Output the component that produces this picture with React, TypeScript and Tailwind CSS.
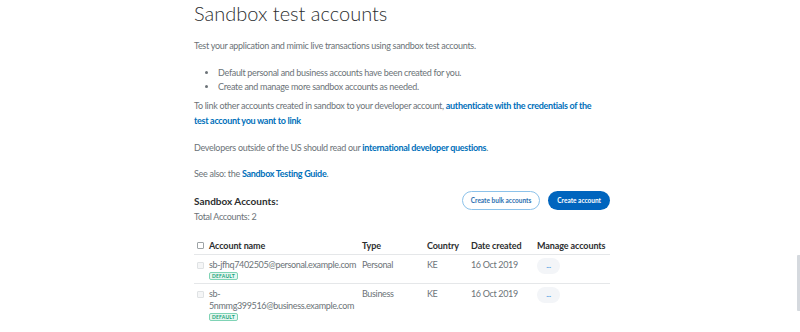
import React from 'react';

const font = { fontFamily: 'Lato, "Open Sans", sans-serif' };

function Badge() {
  return (
    <span className="mt-[1px] block w-fit rounded-[2px] border border-[#7fd3b5] bg-[#e6f7f0] px-[2px] text-[5px] leading-[6px] font-bold tracking-[0.2px] text-[#15a27a]">
      DEFAULT
    </span>
  );
}

function Row({ name, type }: { name: React.ReactNode; type: string }) {
  return (
    <tr className="border-b border-[#e5e7e9] align-top text-[9px] tracking-[-0.35px] text-[#6c7378] last:border-b-0">
      <td className="pt-[4px] pl-[3px]">
        <span className="mt-[3px] block h-[7px] w-[7px] rounded-[1px] border border-[#dfe2e4] bg-[#f5f6f7]" />
      </td>
      <td className="pt-[4px] pb-[3px] leading-[12px]">
        <div className="whitespace-nowrap">{name}</div>
        <Badge />
      </td>
      <td className="pt-[4px] leading-[12px]">{type}</td>
      <td className="pt-[4px] leading-[12px]">KE</td>
      <td className="pt-[4px] leading-[12px]">16 Oct 2019</td>
      <td className="pt-[3px]">
        <button className="flex h-[16px] w-[23px] items-center justify-center rounded-full bg-[#f3f5f8] text-[8px] font-bold leading-none text-[#5aa6e6]">
          <span className="-mt-[3px]">...</span>
        </button>
      </td>
    </tr>
  );
}

export default function App() {
  return (
    <div className="relative h-[332px] w-[800px] overflow-hidden bg-white" style={font}>
      <div className="ml-[194px] w-[416px] text-[9px] leading-[15px] tracking-[-0.3px] text-[#6c7378]">
        <h1 className="pt-[1px] text-[20px] leading-[24px] font-light tracking-normal text-[#2c2e2f]">Sandbox test accounts</h1>

        <p className="mt-[13px]">Test your application and mimic live transactions using sandbox test accounts.</p>

        <ul className="mt-[13px] ml-[24px] list-disc leading-[14px]">
          <li>Default personal and business accounts have been created for you.</li>
          <li>Create and manage more sandbox accounts as needed.</li>
        </ul>

        <p className="mt-[4px] max-w-[402px]">
          To link other accounts created in sandbox to your developer account,{' '}
          <a className="font-bold text-[#0070ba]">authenticate with the credentials of the test account you want to link</a>
        </p>

        <p className="mt-[12px]">
          Developers outside of the US should read our{' '}
          <a className="font-bold text-[#0070ba]">international developer questions</a>.
        </p>

        <p className="mt-[11px]">
          See also: the <a className="font-bold text-[#0070ba]">Sandbox Testing Guide</a>.
        </p>

        <div className="mt-[9px] flex items-start justify-between">
          <div>
            <h2 className="mt-[4px] text-[10px] leading-[14px] font-bold tracking-normal text-[#2c2e2f]">Sandbox Accounts:</h2>
            <div className="mt-[2px] leading-[13px]">Total Accounts: 2</div>
          </div>
          <div className="flex gap-[8px] pt-[1px] tracking-normal">
            <button className="h-[19px] rounded-full border border-[#8cc2ea] bg-white px-[8px] text-[6.5px] font-bold text-[#2c6fb0]">
              Create bulk accounts
            </button>
            <button className="h-[19px] rounded-full bg-[#0065be] px-[9px] text-[6.5px] font-bold text-white">
              Create account
            </button>
          </div>
        </div>

        <table className="mt-[16px] w-full table-fixed border-collapse">
          <colgroup>
            <col className="w-[15px]" />
            <col className="w-[153px]" />
            <col className="w-[65px]" />
            <col className="w-[44px]" />
            <col className="w-[66px]" />
            <col />
          </colgroup>
          <thead>
            <tr className="border-b border-[#e5e7e9] text-left text-[9px] font-bold tracking-[-0.1px] text-[#2c2e2f]">
              <th className="pb-[2px] pl-[3px]">
                <span className="block h-[7px] w-[7px] rounded-[1px] border border-[#9da3a6] bg-white" />
              </th>
              <th className="pb-[2px] leading-[13px]">Account name</th>
              <th className="pb-[2px] leading-[13px]">Type</th>
              <th className="pb-[2px] leading-[13px]">Country</th>
              <th className="pb-[2px] leading-[13px]">Date created</th>
              <th className="pb-[2px] leading-[13px]">Manage accounts</th>
            </tr>
          </thead>
          <tbody>
            <Row name="sb-jfhq7402505@personal.example.com" type="Personal" />
            <Row
              name={
                <>
                  sb-
                  <br />
                  5nmmg399516@business.example.com
                </>
              }
              type="Business"
            />
          </tbody>
        </table>
      </div>

      {/* scrollbar thumb */}
      <div className="absolute top-[255px] right-0 h-[56px] w-[3px] rounded-l-[1px] bg-[#d5d9de]" />
    </div>
  );
}
